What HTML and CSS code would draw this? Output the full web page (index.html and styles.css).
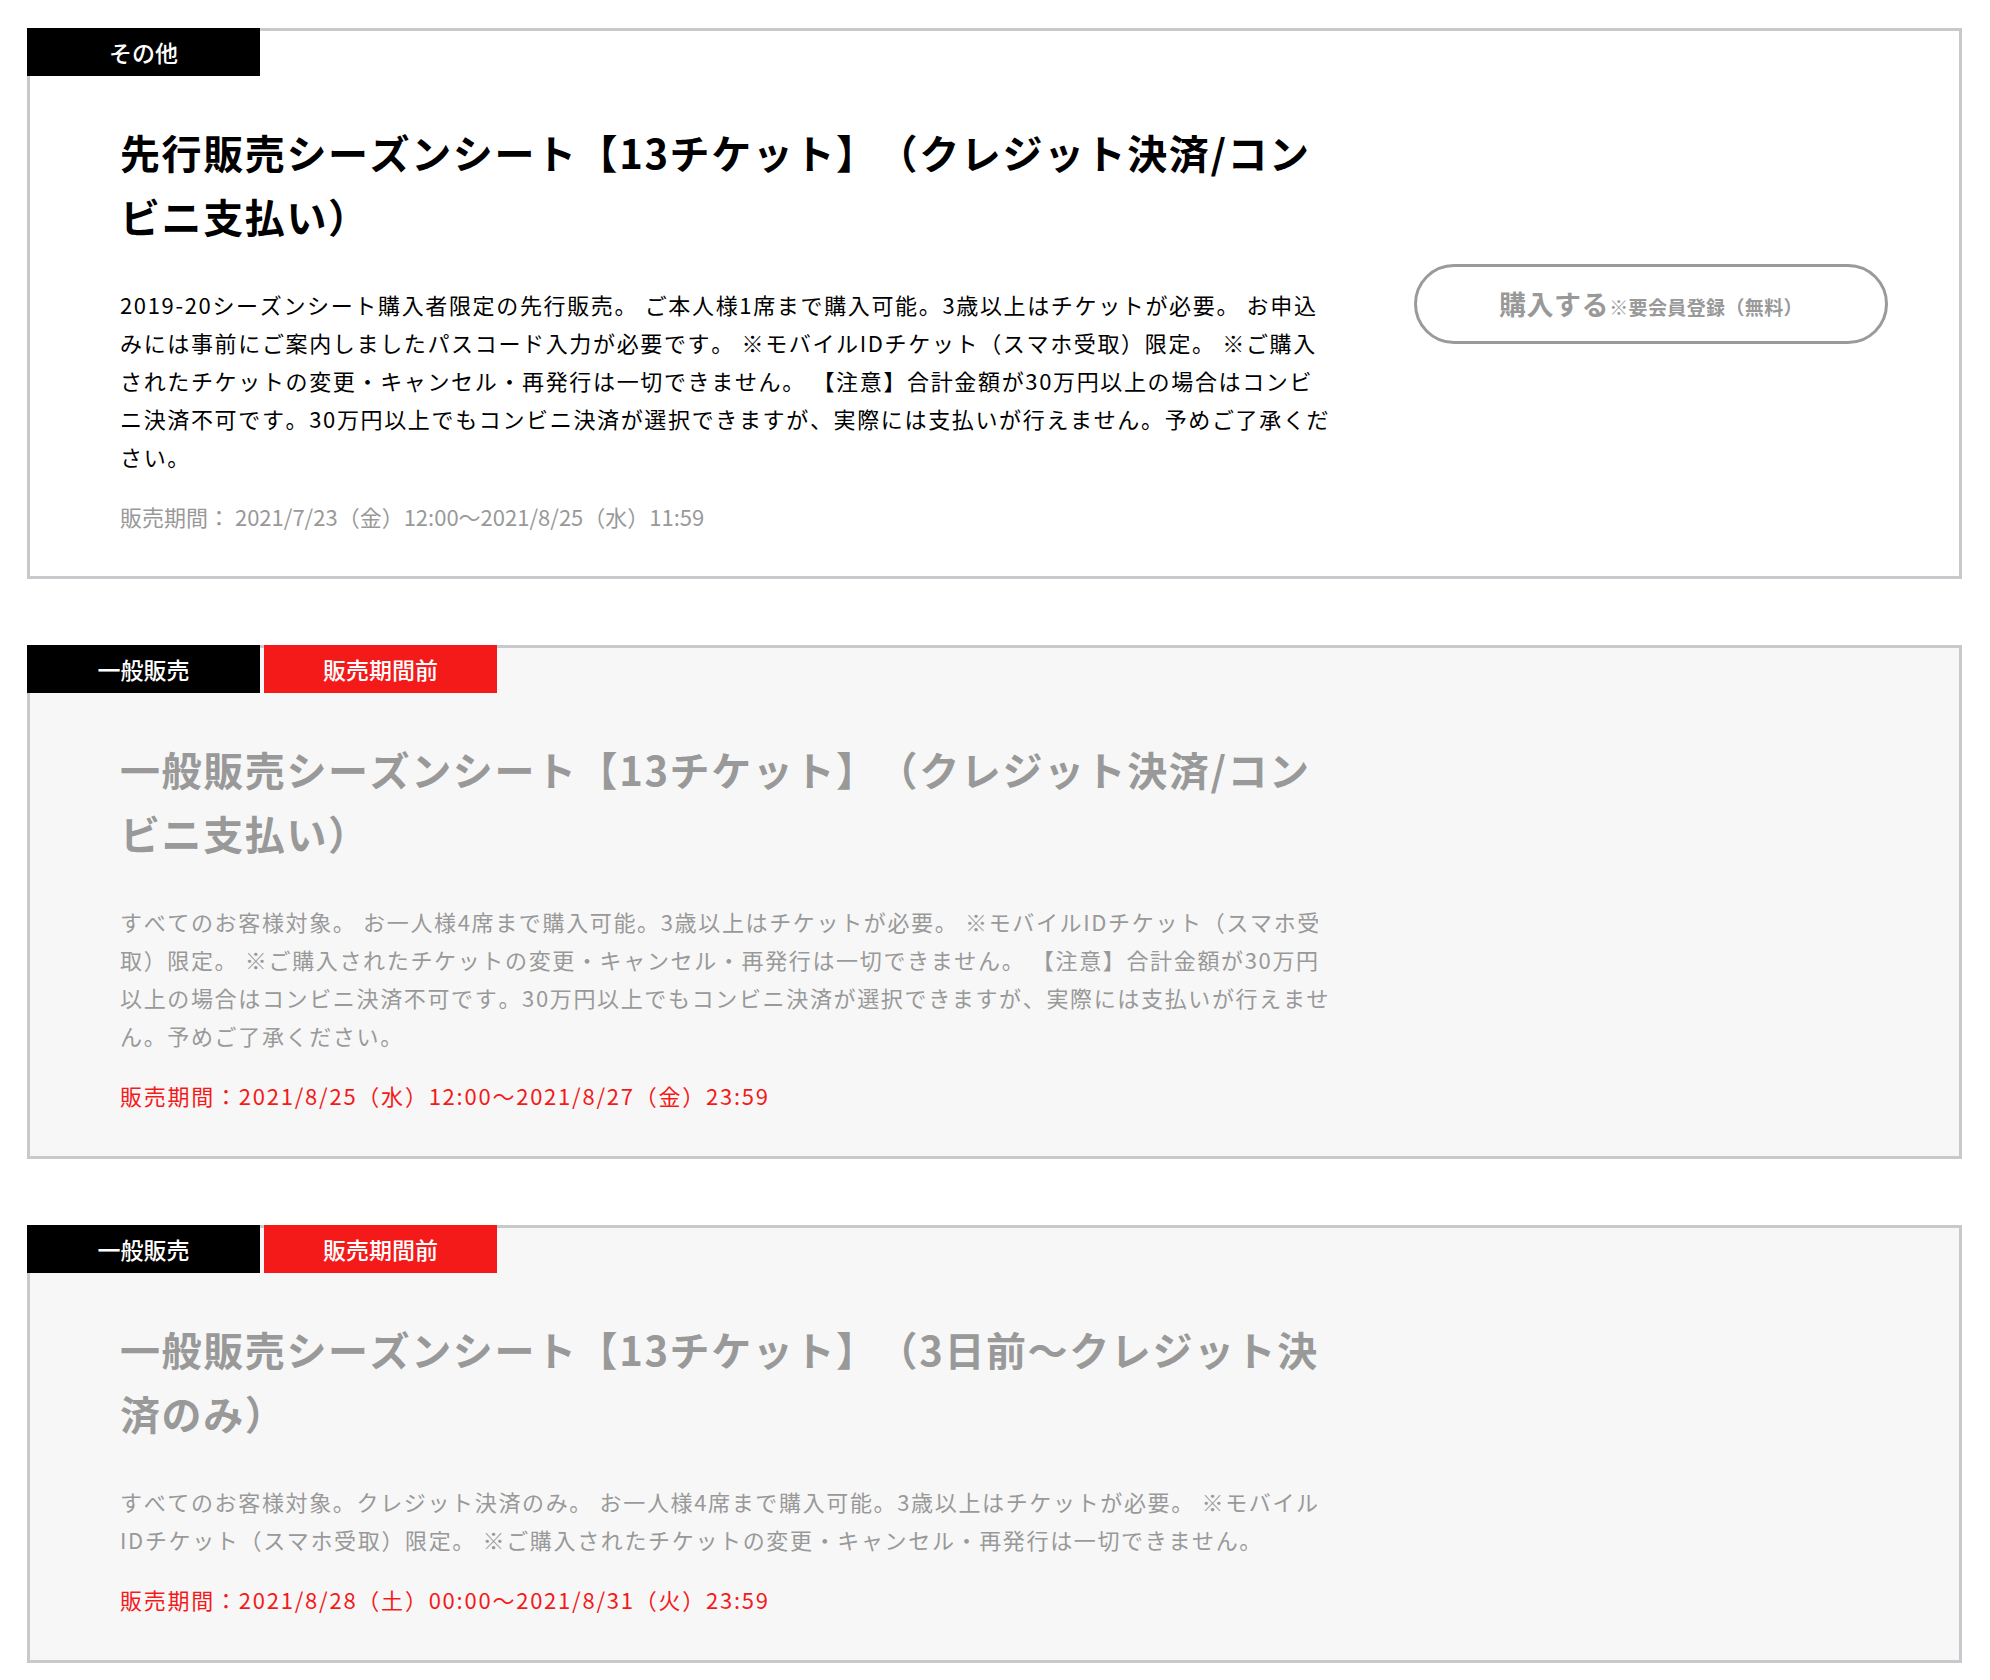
FILE: index.html
```html
<!DOCTYPE html>
<html lang="ja">
<head>
<meta charset="utf-8">
<title>チケット</title>
<link rel="stylesheet" href="styles.css">
</head>
<body>
<div class="page">
  <section class="card">
    <div class="main">
      <div class="tags"><span class="tag tag-black">その他</span></div>
      <div class="content">
        <h2 class="title">先行販売シーズンシート【13チケット】（クレジット決済/コンビニ支払い）</h2>
        <p class="desc">2019-20シーズンシート購入者限定の先行販売。 ご本人様1席まで購入可能。3歳以上はチケットが必要。 お申込みには事前にご案内しましたパスコード入力が必要です。 ※モバイルIDチケット（スマホ受取）限定。 ※ご購入されたチケットの変更・キャンセル・再発行は一切できません。 【注意】合計金額が30万円以上の場合はコンビニ決済不可です。30万円以上でもコンビニ決済が選択できますが、実際には支払いが行えません。予めご了承ください。</p>
        <p class="period">販売期間： 2021/7/23（金）12:00〜2021/8/25（水）11:59</p>
      </div>
    </div>
    <div class="aside">
      <a class="buy" href="#"><span class="buy-main">購入する</span><span class="buy-note">※要会員登録（無料）</span></a>
    </div>
  </section>

  <section class="card card-off">
    <div class="main">
      <div class="tags"><span class="tag tag-black">一般販売</span><span class="tag tag-red">販売期間前</span></div>
      <div class="content">
        <h2 class="title">一般販売シーズンシート【13チケット】（クレジット決済/コンビニ支払い）</h2>
        <p class="desc">すべてのお客様対象。 お一人様4席まで購入可能。3歳以上はチケットが必要。 ※モバイルIDチケット（スマホ受取）限定。 ※ご購入されたチケットの変更・キャンセル・再発行は一切できません。 【注意】合計金額が30万円以上の場合はコンビニ決済不可です。30万円以上でもコンビニ決済が選択できますが、実際には支払いが行えません。予めご了承ください。</p>
        <p class="period period-red">販売期間：2021/8/25（水）12:00〜2021/8/27（金）23:59</p>
      </div>
    </div>
  </section>

  <section class="card card-off">
    <div class="main">
      <div class="tags"><span class="tag tag-black">一般販売</span><span class="tag tag-red">販売期間前</span></div>
      <div class="content">
        <h2 class="title">一般販売シーズンシート【13チケット】（3日前〜クレジット決済のみ）</h2>
        <p class="desc">すべてのお客様対象。クレジット決済のみ。 お一人様4席まで購入可能。3歳以上はチケットが必要。 ※モバイルIDチケット（スマホ受取）限定。 ※ご購入されたチケットの変更・キャンセル・再発行は一切できません。</p>
        <p class="period period-red">販売期間：2021/8/28（土）00:00〜2021/8/31（火）23:59</p>
      </div>
    </div>
  </section>
</div>
</body>
</html>
```
FILE: styles.css
```css
* { box-sizing: border-box; }
html, body { margin: 0; padding: 0; background: #fff; }
body {
  font-family: "Noto Sans CJK JP", "Noto Sans", sans-serif;
  color: #000;
  text-spacing-trim: space-all;
  font-kerning: none;
}
.page {
  padding: 28px 28px 18px 27px;
}
.card {
  display: flex;
  border: 3px solid #c8c9cc;
  background: #fff;
  margin-bottom: 66px;
}
.card:last-child { margin-bottom: 0; }
.card-off { background: #f7f7f7; color: #999; }
.main {
  flex: 0 0 1302px;
  display: flex;
  flex-direction: column;
}
.tags {
  display: flex;
  gap: 4px;
  margin: -3px 0 0 -3px;
}
.tag {
  width: 233px;
  height: 48px;
  display: flex;
  align-items: center;
  justify-content: center;
  color: #fff;
  font-size: 23px;
  font-weight: 500;
  line-height: 1;
}
.tag-black { background: #000; }
.tag-red { background: #f41a1a; }
.content {
  padding: 44px 0 41px 90px;
}
.card-off .content { padding-bottom: 42px; }
.title {
  margin: 0;
  font-size: 40px;
  line-height: 64px;
  font-weight: 700;
  letter-spacing: 0.04em;
}
.desc {
  margin: 37px 0 0;
  font-size: 22px;
  line-height: 38px;
  letter-spacing: 0.075em;
}
.period {
  margin: 22px 0 0;
  font-size: 22px;
  line-height: 38px;
  color: #999;
  letter-spacing: 0;
}
.period-red { color: #f41a1a; letter-spacing: 0.08em; }
.aside {
  flex: 1;
  display: flex;
  align-items: center;
  justify-content: flex-end;
  padding-right: 71px;
}
.buy {
  width: 474px;
  height: 80px;
  border: 3px solid #9a9a9a;
  border-radius: 40px;
  display: flex;
  align-items: center;
  justify-content: center;
  text-decoration: none;
  color: #999;
  font-weight: 700;
}
.buy-main { font-size: 27px; letter-spacing: 0.02em; }
.buy-note { font-size: 19px; margin-top: 6px; letter-spacing: 0.02em; }
```
